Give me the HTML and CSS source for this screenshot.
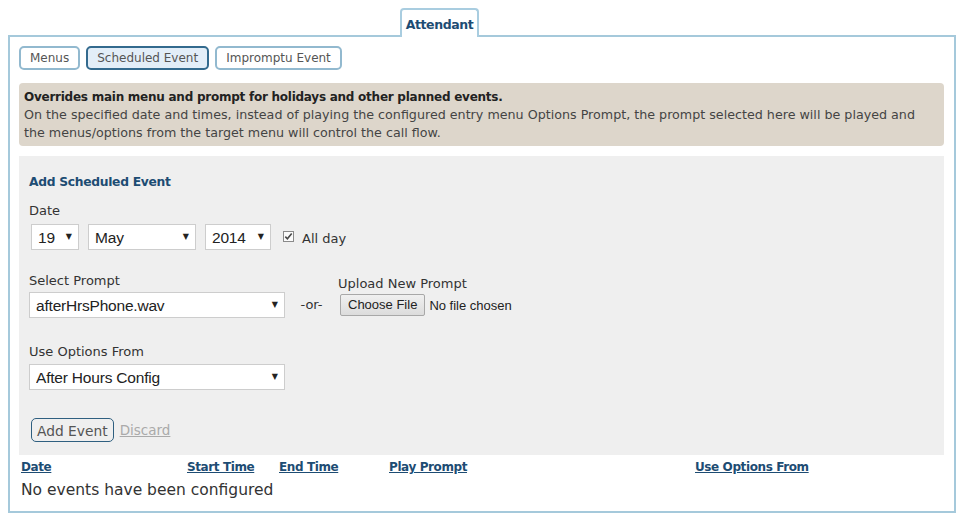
FILE: index.html
```html
<!DOCTYPE html>
<html>
<head>
<meta charset="utf-8">
<link rel="stylesheet" href="styles.css">
</head>
<body>
<div class="tabs">
  <div class="tab">Attendant</div>
</div>
<div class="panel">
  <div class="subnav">
    <span class="pill">Menus</span>
    <span class="pill active">Scheduled Event</span>
    <span class="pill">Impromptu Event</span>
  </div>
  <div class="info">
    <div class="info-title">Overrides main menu and prompt for holidays and other planned events.</div>
    <div class="info-text">On the specified date and times, instead of playing the configured entry menu Options Prompt, the prompt selected here will be played and the menus/options from the target menu will control the call flow.</div>
  </div>
  <div class="form">
    <div class="form-title">Add Scheduled Event</div>
    <div class="label">Date</div>
    <div class="date-row">
      <span class="sel w-day"><select><option>19</option></select></span>
      <span class="sel w-month"><select><option>May</option></select></span>
      <span class="sel w-year"><select><option>2014</option></select></span>
      <span class="check"><svg width="11" height="11" viewBox="0 0 11 11"><rect x="0.5" y="0.5" width="10" height="10" fill="#fbfbfb" stroke="#8a8a8a"/><path d="M2.3 5.6 L4.4 7.8 L8.7 2.6" fill="none" stroke="#4a4a4a" stroke-width="1.6"/></svg></span>
      <span class="allday">All day</span>
    </div>
    <div class="prompt-row">
      <div class="col">
        <div class="label">Select Prompt</div>
        <span class="sel w-wide"><select><option>afterHrsPhone.wav</option></select></span>
      </div>
      <span class="or">-or-</span>
      <div class="col upload">
        <div class="label">Upload New Prompt</div>
        <div class="file-row"><span class="file-btn">Choose File</span><span class="file-none">No file chosen</span></div>
      </div>
    </div>
    <div class="options">
      <div class="label">Use Options From</div>
      <span class="sel w-wide"><select><option>After Hours Config</option></select></span>
    </div>
    <div class="actions">
      <span class="add-btn">Add Event</span>
      <a class="discard" href="#">Discard</a>
    </div>
  </div>
  <div class="table-head">
    <a href="#">Date</a>
    <a href="#">Start Time</a>
    <a href="#">End Time</a>
    <a href="#">Play Prompt</a>
    <a href="#">Use Options From</a>
  </div>
  <div class="empty">No events have been configured</div>
</div>
</body>
</html>
```
FILE: styles.css
```css
body {
  margin: 8px;
  font-family: "DejaVu Sans", sans-serif;
  font-size: 13px;
  color: #333;
  background: #fff;
}
.tabs {
  display: flex;
  padding-left: 392px;
  height: 27px;
}
.tab {
  position: relative;
  z-index: 1;
  width: 75px;
  height: 27px;
  border: 2px solid #a9cde0;
  border-bottom: none;
  border-radius: 4px 4px 0 0;
  background: #fff;
  color: #1d4c73;
  font-weight: bold;
  font-size: 12.5px;
  letter-spacing: -0.4px;
  text-align: center;
  line-height: 29px;
}
.panel {
  border: 2px solid #a5c9db;
  padding: 9px 10px 8px 9px;
  height: 478px;
  box-sizing: border-box;
}
.subnav {
  display: flex;
  gap: 6px;
}
.pill {
  height: 20px;
  line-height: 21px;
  padding: 0 9px;
  border: 2px solid #92b9cf;
  border-radius: 5px;
  color: #555;
  font-size: 12px;
  background: #fff;
}
.pill.active {
  border-color: #336a8e;
  background: #e3eef8;
}
.info {
  margin-top: 13px;
  background: #ddd6cb;
  border-radius: 4px;
  padding: 5px 5px 4px 5px;
  line-height: 18px;
}
.info-title {
  font-weight: bold;
  color: #222;
  font-size: 12px;
  letter-spacing: -0.25px;
}
.info-text {
  font-size: 12.7px;
  color: #444;
}
.form {
  margin-top: 10px;
  background: #efefef;
  padding: 17px 10px 13px 10px;
}
.form-title {
  color: #1d4c73;
  font-weight: bold;
  font-size: 12.3px;
  letter-spacing: -0.3px;
  line-height: 18px;
}
.label {
  font-size: 13px;
  color: #333;
  line-height: 16px;
}
.form-title + .label {
  margin-top: 12px;
}
.date-row {
  display: flex;
  align-items: center;
  gap: 9px;
  margin: 5px 0 0 2px;
}
.sel {
  position: relative;
  display: inline-block;
  height: 26px;
}
.sel select {
  appearance: none;
  -webkit-appearance: none;
  width: 100%;
  height: 26px;
  border: 1px solid #cdcdcd;
  border-radius: 0;
  background: #fff;
  font-family: "Liberation Sans", Arial, sans-serif;
  font-size: 15.5px;
  letter-spacing: -0.2px;
  color: #222;
  padding: 0 0 0 6px;
  margin: 0;
}
.sel::after {
  content: "\25BC";
  position: absolute;
  right: 7px;
  top: 8px;
  font-size: 8px;
  line-height: 10px;
  color: #222;
  pointer-events: none;
}
.w-day { width: 48px; }
.w-month { width: 108px; }
.w-year { width: 66px; }
.w-wide { width: 256px; }
.check {
  display: inline-flex;
  margin-left: 3px;
  margin-top: -2px;
}
.allday {
  font-size: 13px;
  margin-left: -1px;
  margin-top: 2px;
}
.prompt-row {
  display: flex;
  align-items: flex-end;
  margin-top: 23px;
}
.col .label {
  margin-bottom: 3px;
}
.or {
  width: 53px;
  text-align: center;
  line-height: 26px;
  font-size: 13px;
}
.upload .label {
  margin-bottom: 0;
}
.file-row {
  display: flex;
  align-items: center;
  height: 26px;
  margin-left: 2px;
}
.file-btn {
  height: 20px;
  line-height: 20px;
  padding: 0 7px;
  border: 1px solid #a8a8a8;
  border-radius: 2px;
  background: linear-gradient(#f0f0f0, #dcdcdc);
  font-family: "Liberation Sans", Arial, sans-serif;
  font-size: 13px;
  color: #222;
}
.file-none {
  margin-left: 4px;
  font-family: "Liberation Sans", Arial, sans-serif;
  font-size: 13px;
  color: #222;
}
.options {
  margin-top: 26px;
}
.options .label {
  margin-bottom: 4px;
}
.actions {
  display: flex;
  align-items: center;
  gap: 6px;
  margin: 28px 0 0 2px;
}
.add-btn {
  height: 22px;
  line-height: 24px;
  padding: 0 5px;
  border: 1px solid #2f5f80;
  border-radius: 5px;
  color: #555;
  font-size: 13.8px;
}
.discard {
  color: #aaa;
  font-size: 13.5px;
}
.table-head {
  display: grid;
  grid-template-columns: 166px 92px 110px 306px 1fr;
  margin: 4px 0 0 2px;
  line-height: 16px;
}
.table-head a {
  color: #1d4c73;
  font-weight: bold;
  font-size: 12px;
  letter-spacing: -0.4px;
}
.empty {
  margin: 5px 0 0 2px;
  font-size: 15.5px;
  color: #333;
  line-height: 20px;
}
```
